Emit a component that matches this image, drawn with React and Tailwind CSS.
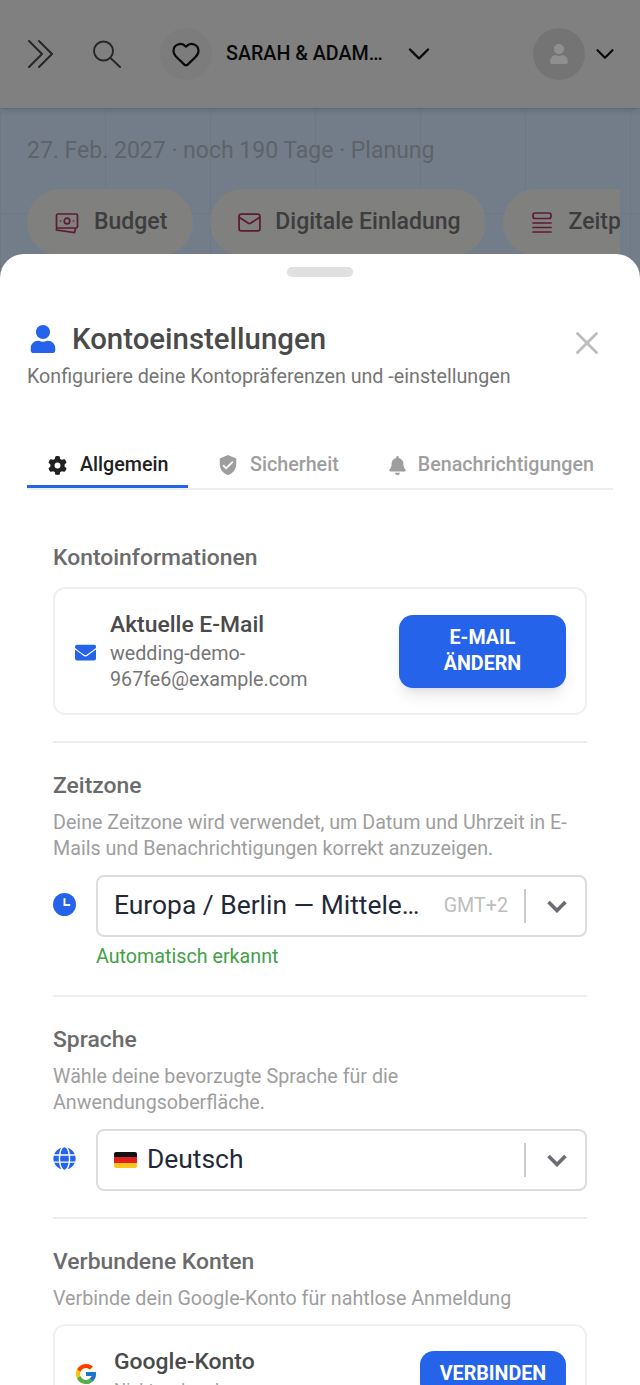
import React from 'react';
import { Heart, ChevronDown, Mail, X } from 'lucide-react';
import { FaUser, FaEnvelope, FaGlobe, FaBell } from 'react-icons/fa';
import { FaGear } from 'react-icons/fa6';
import { MdVerifiedUser } from 'react-icons/md';
import { FcGoogle } from 'react-icons/fc';

const ExpandIcon = () => (
  <svg width="28" height="28" viewBox="0 0 28 28" fill="none" stroke="currentColor" strokeWidth="2" strokeLinecap="round" strokeLinejoin="round">
    <path d="M2 1l13 13L2 27M12 1l13 13-13 13" />
  </svg>
);

const SearchIcon = () => (
  <svg width="28" height="28" viewBox="0 0 28 28" fill="none" stroke="currentColor" strokeWidth="1.9" strokeLinecap="round">
    <circle cx="10.500" cy="11" r="9.500" />
    <path d="M18 18.500l9 8.500" />
  </svg>
);

const BudgetIcon = () => (
  <svg width="24" height="24" viewBox="0 0 24 24" fill="none" stroke="currentColor" strokeWidth="1.7" strokeLinecap="round">
    <rect x="1.500" y="3" width="21" height="14" rx="1.500" />
    <circle cx="12" cy="10" r="2.800" />
    <path d="M5.500 10h.01M18.500 10h.01M1.500 17v2l18 2.500 1-4" />
  </svg>
);

const ListIcon = () => (
  <svg width="24" height="24" viewBox="0 0 24 24" fill="none" stroke="currentColor" strokeWidth="1.7" strokeLinecap="round">
    <rect x="3" y="2" width="18" height="5.500" rx="2" />
    <path d="M3 12h18M3 16.500h18M3 21h18" />
  </svg>
);

const ClockIcon = () => (
  <svg width="23" height="23" viewBox="0 0 24 24" className="mt-[-3px] shrink-0">
    <circle cx="12" cy="12" r="12" fill="#2563eb" />
    <path d="M12 5.500v7h6" fill="none" stroke="#fff" strokeWidth="2" />
  </svg>
);

const SelectChevron = () => (
  <svg width="20" height="13" viewBox="0 0 20 13" fill="none" stroke="currentColor" strokeWidth="3.600">
    <path d="M1.500 2l8.500 8.500L18.500 2" />
  </svg>
);

const Chip = ({ icon, label, className }) => (
  <div className={`flex h-[67px] shrink-0 items-center rounded-full bg-[#e4e4e2] ${className}`}>
    <span className="text-[#a42f5f]">{icon}</span>
    <span className="text-[23px] font-medium text-[#6e6e6e]">{label}</span>
  </div>
);

const Tab = ({ icon, label, active, className }) => (
  <div className={`flex h-[47px] items-center border-y-[3px] border-t-transparent pt-[1px] font-medium ${active ? 'border-b-[#2563eb] text-[#212121]' : 'border-b-transparent text-[#9e9e9e]'} ${className}`}>
    {icon}
    <span className="text-[19.700px]">{label}</span>
  </div>
);

const SelectBox = ({ children }) => (
  <div className="flex h-[62px] min-w-0 flex-1 items-center rounded-lg border-2 border-[#dcdde0] pl-[16px]">
    <div className="flex min-w-0 flex-1 items-center">{children}</div>
    <div className="h-[34px] w-[2px] shrink-0 bg-[#cccccc]" />
    <div className="flex w-[59px] shrink-0 justify-center pl-[3px] text-[#6b6b73]">
      <SelectChevron />
    </div>
  </div>
);

export default function App() {
  return (
    <div className="relative h-[1385px] w-[640px] overflow-hidden bg-white font-['Roboto',sans-serif]">
      {/* page behind the sheet */}
      <header className="relative flex h-[108px] items-center bg-[#e5e5e5] pl-[27px] pr-[20px] shadow-md">
        <span className="text-[#444]"><ExpandIcon /></span>
        <span className="ml-[38px] text-[#444]"><SearchIcon /></span>
        <div className="ml-[39px] flex h-[52px] w-[52px] items-center justify-center rounded-full bg-[#dedede]">
          <Heart size={30} strokeWidth={1.8} className="text-[#111]" />
        </div>
        <span className="ml-[14px] w-[157px] truncate text-[19.700px] font-medium text-[#111]">SARAH &amp; ADAMS HOCHZEIT</span>
        <ChevronDown size={36} strokeWidth={1.6} className="ml-[18px] text-[#111]" />
        <div className="ml-auto flex h-[52px] w-[52px] items-center justify-center rounded-full bg-[#cfcfcf] text-white">
          <FaUser size={20} />
        </div>
        <ChevronDown size={30} strokeWidth={1.7} className="ml-[5px] text-[#111]" />
      </header>
      <main className="h-[300px] bg-[#cddff5] bg-[linear-gradient(to_right,#c4d6ea_1px,transparent_1px),linear-gradient(to_bottom,#c4d6ea_1px,transparent_1px)] bg-[size:105px_105px] pl-[27px] pt-[27px]">
        <p className="text-[23px] leading-[32px] text-[#a8b0bb]">27. Feb. 2027 · noch 190 Tage · Planung</p>
        <div className="mt-[22px] flex w-[593px] gap-[17px] overflow-hidden">
          <Chip icon={<BudgetIcon />} label="Budget" className="gap-[15px] pl-[28px] pr-[26px]" />
          <Chip icon={<Mail size={25} strokeWidth={1.7} />} label="Digitale Einladung" className="gap-[13px] pl-[27px] pr-[25px]" />
          <Chip icon={<ListIcon />} label="Zeitplan" className="gap-[15px] pl-[27px] pr-[26px]" />
        </div>
      </main>

      <div className="absolute inset-0 bg-black/[.44]" />

      {/* bottom sheet */}
      <section className="absolute inset-x-0 bottom-0 top-[254px] overflow-hidden rounded-t-[24px] bg-white px-[27px]">
        <div className="mx-auto mt-[13px] h-[10px] w-[66px] rounded-full bg-[#e0e0e0]" />
        <div className="mt-[39px] flex items-center">
          <FaUser size={28} className="ml-[2px] mt-[-1px] text-[#2563eb]" />
          <h1 className="ml-[15px] text-[29.400px] font-medium leading-[38px] text-[#4a4a4a]">Kontoeinstellungen</h1>
          <X size={38} strokeWidth={1.8} className="ml-auto mr-[7px] mt-[8px] text-[#bdbdbd]" />
        </div>
        <p className="mt-[3px] text-[19.700px] leading-[24px] text-[#757575]">Konfiguriere deine Kontopräferenzen und -einstellungen</p>

        <div className="mt-[52px] flex border-b-2 border-[#eeeeee]">
          <Tab active icon={<FaGear size={19} />} label="Allgemein" className="-mb-[1px] w-[161px] gap-[13px] pl-[21px]" />
          <Tab icon={<MdVerifiedUser size={22} />} label="Sicherheit" className="ml-[29px] gap-[11px]" />
          <Tab icon={<FaBell size={19} />} label="Benachrichtigungen" className="ml-[49px] gap-[11px]" />
        </div>

        <div className="px-[26px]">
          <h2 className="mt-[54px] text-[22.900px] font-medium leading-[28px] text-[#6b6b6b]">Kontoinformationen</h2>
          <div className="mt-[15px] flex h-[128px] items-center rounded-xl border-2 border-[#f0f0f0] pl-[20px] pr-[19px]">
            <FaEnvelope size={21} className="mt-[3px] shrink-0 text-[#2563eb]" />
            <div className="ml-[14px] min-w-0 flex-1">
              <p className="text-[22.900px] font-medium leading-[30px] text-[#4a4a4a]">Aktuelle E-Mail</p>
              <p className="mt-[1px] w-[230px] text-[19.700px] leading-[26px] text-[#757575]">wedding-demo-967fe6@example.com</p>
            </div>
            <button className="h-[73px] w-[167px] shrink-0 rounded-[14px] bg-[#2563eb] px-[30px] text-[19.700px] font-bold leading-[26px] text-white shadow-lg">E-MAIL ÄNDERN</button>
          </div>

          <div className="mt-[26px] border-t-2 border-[#eeeeee]" />
          <h2 className="mt-[29px] text-[22.900px] font-medium leading-[28px] text-[#6b6b6b]">Zeitzone</h2>
          <p className="mt-[10px] text-[19.700px] leading-[26px] text-[#9e9e9e]">Deine Zeitzone wird verwendet, um Datum und Uhrzeit in E-Mails und Benachrichtigungen korrekt anzuzeigen.</p>
          <div className="mt-[13px] flex items-center gap-[20px]">
            <ClockIcon />
            <SelectBox>
              <span className="min-w-0 flex-1 truncate text-[26.400px] text-[#1f2937]">Europa / Berlin — Mitteleuropäische Zeit</span>
              <span className="ml-[24px] mr-[16px] shrink-0 text-[19.700px] text-[#bdbdbd]">GMT+2</span>
            </SelectBox>
          </div>
          <p className="ml-[43px] mt-[7px] text-[19.700px] leading-[26px] text-[#43a047]">Automatisch erkannt</p>

          <div className="mt-[25px] border-t-2 border-[#eeeeee]" />
          <h2 className="mt-[29px] text-[22.900px] font-medium leading-[28px] text-[#6b6b6b]">Sprache</h2>
          <p className="mt-[10px] text-[19.700px] leading-[26px] text-[#9e9e9e]">Wähle deine bevorzugte Sprache für die Anwendungsoberfläche.</p>
          <div className="mt-[13px] flex items-center gap-[20px]">
            <FaGlobe size={23} className="mt-[-3px] shrink-0 text-[#2563eb]" />
            <SelectBox>
              <div className="flex h-[16px] w-[23px] flex-col overflow-hidden rounded-[2px]">
                <div className="flex-1 bg-[#111]" />
                <div className="flex-1 bg-[#e02020]" />
                <div className="flex-1 bg-[#fcc419]" />
              </div>
              <span className="ml-[10px] text-[26.400px] text-[#1f2937]">Deutsch</span>
            </SelectBox>
          </div>

          <div className="mt-[26px] border-t-2 border-[#eeeeee]" />
          <h2 className="mt-[29px] text-[22.900px] font-medium leading-[28px] text-[#6b6b6b]">Verbundene Konten</h2>
          <p className="mt-[10px] text-[19.700px] leading-[26px] text-[#9e9e9e]">Verbinde dein Google-Konto für nahtlose Anmeldung</p>
          <div className="mt-[12px] flex h-[100px] items-center rounded-xl border-2 border-[#f0f0f0] pl-[19px] pr-[19px]">
            <FcGoogle size={24} className="shrink-0" />
            <div className="ml-[16px]">
              <p className="text-[22.900px] font-medium leading-[30px] text-[#4a4a4a]">Google-Konto</p>
              <p className="text-[17px] leading-[24px] text-[#9e9e9e]">Nicht verbunden</p>
            </div>
            <button className="ml-auto h-[46px] w-[146px] rounded-[14px] bg-[#2563eb] text-[19.700px] font-bold text-white">VERBINDEN</button>
          </div>
        </div>
      </section>
    </div>
  );
}
